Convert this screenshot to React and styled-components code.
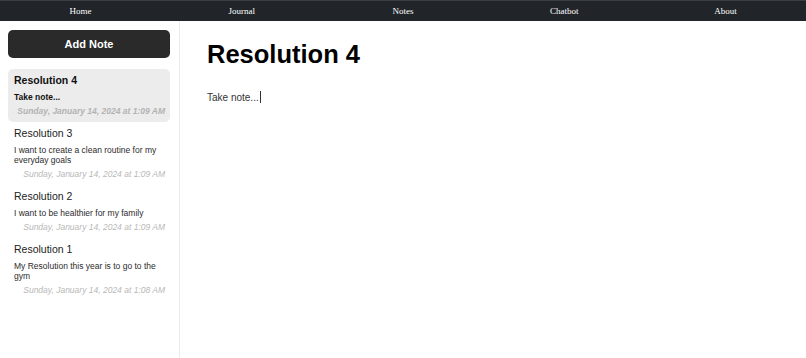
import React from "react";
import styled, {createGlobalStyle} from "styled-components";

const {useState} = React;

const notes = [
    {id: 4, title: "Resolution 4", body: "Take note...", date: "Sunday, January 14, 2024 at 1:09 AM"},
    {id: 3, title: "Resolution 3", body: "I want to create a clean routine for my everyday goals", date: "Sunday, January 14, 2024 at 1:09 AM"},
    {id: 2, title: "Resolution 2", body: "I want to be healthier for my family", date: "Sunday, January 14, 2024 at 1:09 AM"},
    {id: 1, title: "Resolution 1", body: "My Resolution this year is to go to the gym", date: "Sunday, January 14, 2024 at 1:08 AM"},
];

const links = ["Home", "Journal", "Notes", "Chatbot", "About"];

function App () {
    const [active, setActive] = useState(4);
    const current = notes.find(n => n.id === active);

    return <>
        <Global />
        <Nav>
            {links.map(l => <NavLink key={l}>{l}</NavLink>)}
        </Nav>
        <Page>
            <Sidebar>
                <AddButton>Add Note</AddButton>
                <NoteList>
                    {notes.map(n => <NoteItem key={n.id} $active={n.id === active} onClick={() => setActive(n.id)}>
                        <NoteTitle $active={n.id === active}>{n.title}</NoteTitle>
                        <NoteBody $active={n.id === active}>{n.body}</NoteBody>
                        <NoteDate $active={n.id === active}>{n.date}</NoteDate>
                    </NoteItem>)}
                </NoteList>
            </Sidebar>
            <Editor>
                <Heading>{current.title}</Heading>
                <Content>{current.body}<Caret /></Content>
            </Editor>
        </Page>
    </>
}

const Global = createGlobalStyle`
body {
    margin: 0;
    background: #fff;
    font-family: "Liberation Sans", Arial, sans-serif;
}
`

const Nav = styled.nav`
display: grid;
grid-template-columns: repeat(5, 1fr);
height: 21px;
background: #212529;
border-top: 1px solid #3b3e42;
box-sizing: border-box;
`

const NavLink = styled.a`
display: flex;
align-items: center;
justify-content: center;
color: #fff;
font-family: "Liberation Serif", "Times New Roman", serif;
font-size: 9px;
cursor: pointer;
`

const Page = styled.div`
display: flex;
min-height: calc(100vh - 21px);
`

const Sidebar = styled.aside`
width: 180px;
flex-shrink: 0;
box-sizing: border-box;
border-right: 1px solid #ebebeb;
padding: 9px 9px 0 8px;
`

const AddButton = styled.button`
display: block;
width: 100%;
height: 28px;
border: none;
border-radius: 5px;
background: #2a2a2a;
color: #fff;
font-family: "Liberation Sans", Arial, sans-serif;
font-weight: bold;
font-size: 11px;
cursor: pointer;
`

const NoteList = styled.div`
display: flex;
flex-direction: column;
margin-top: 11px;
`

const NoteItem = styled.div`
padding: 5px 5px 5px 6px;
border-radius: 5px;
background: ${p => p.$active ? "#ececec" : "transparent"};
cursor: pointer;
`

const NoteTitle = styled.div`
font-size: 10.5px;
line-height: 12px;
margin-bottom: 6px;
color: ${p => p.$active ? "#111" : "#222"};
font-weight: ${p => p.$active ? "bold" : "normal"};
`

const NoteBody = styled.div`
font-size: 8.5px;
line-height: 10px;
margin-bottom: 4px;
color: ${p => p.$active ? "#111" : "#2b2b2b"};
font-weight: ${p => p.$active ? "bold" : "normal"};
`

const NoteDate = styled.div`
font-size: 8.5px;
line-height: 11px;
font-style: italic;
text-align: right;
color: ${p => p.$active ? "#b3b3b3" : "#b8b8b8"};
font-weight: ${p => p.$active ? "bold" : "normal"};
`

const Editor = styled.main`
flex: 1;
padding: 18px 27px;
`

const Heading = styled.h1`
margin: 0;
font-size: 25.5px;
line-height: 30px;
font-weight: bold;
color: #000;
`

const Content = styled.div`
margin-top: 22px;
font-size: 10px;
line-height: 14px;
color: #333;
`

const Caret = styled.span`
display: inline-block;
width: 1px;
height: 12px;
margin-left: 1px;
vertical-align: -2px;
background: #333;
`

export default App;
